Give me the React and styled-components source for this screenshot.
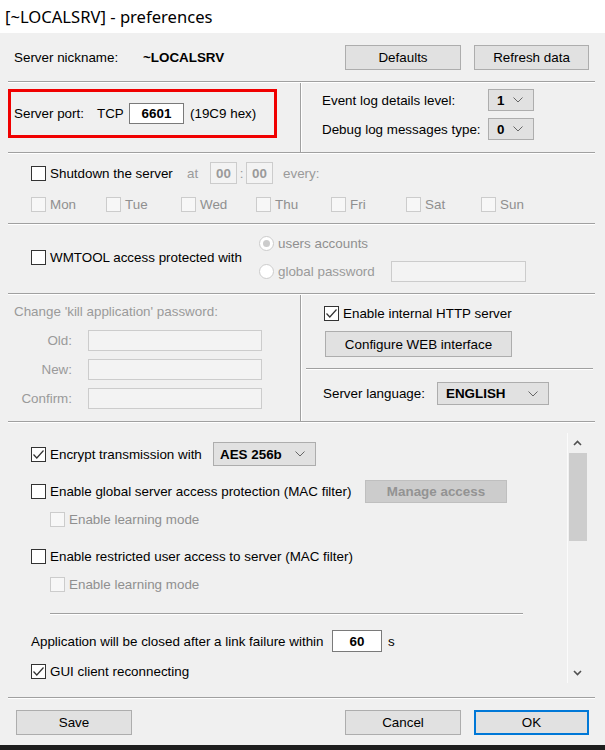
import React from 'react';
import styled, { createGlobalStyle } from 'styled-components';

const GlobalStyle = createGlobalStyle`
  html, body { margin: 0; padding: 0; background: #f0f0f0; }
  body {
    font-family: "Liberation Sans", Arial, sans-serif;
    font-size: 13.4px;
    color: #000;
  }
  * { box-sizing: border-box; }
`;

const Window = styled.div`
  width: 605px;
  height: 750px;
  display: flex;
  flex-direction: column;
  background: #f0f0f0;
  overflow: hidden;
`;

const TitleBar = styled.div`
  height: 33px;
  flex: none;
  background: #fff;
  display: flex;
  align-items: center;
  padding-left: 5px;
  font-family: "Noto Sans", "Open Sans", sans-serif;
  font-size: 16.6px;
  color: #000;
`;

const HLine = styled.div`
  flex: none;
  height: 2px;
  border-top: 1px solid #a0a0a0;
  border-bottom: 1px solid #fff;
  margin: ${p => p.$top || 0}px ${p => p.$right ?? 10}px 0 ${p => p.$left ?? 8}px;
  width: ${p => (p.$w ? `${p.$w}px` : 'auto')};
`;

const VLine = styled.div`
  flex: none;
  width: 2px;
  border-left: 1px solid #a0a0a0;
  border-right: 1px solid #fff;
`;

const Header = styled.div`
  height: 48px;
  flex: none;
  display: flex;
  align-items: center;
  padding: 0 16px 0 14px;
`;

const Label = styled.span`
  color: ${p => (p.$dim ? '#9a9a9a' : '#000')};
  font-weight: ${p => (p.$bold ? 'bold' : 'normal')};
  white-space: nowrap;
  width: ${p => (p.$w ? `${p.$w}px` : 'auto')};
  margin-left: ${p => p.$ml || 0}px;
  text-align: ${p => p.$align || 'left'};
  flex: none;
`;

const Button = styled.button`
  font: inherit;
  width: ${p => p.$w || 116}px;
  height: ${p => p.$h || 25}px;
  background: #e1e1e1;
  border: ${p => (p.$primary ? '2px solid #0078d7' : '1px solid #adadad')};
  color: #000;
  padding: 0;
  margin-left: ${p => p.$ml || 0}px;
  flex: none;
`;

const DisabledButton = styled(Button)`
  background: #cccccc;
  border: 1px solid #bfbfbf;
  color: #939393;
  font-weight: bold;
`;

const Spacer = styled.div`
  flex: 1;
`;

const Split = styled.div`
  display: flex;
  height: ${p => p.$h}px;
  flex: none;
`;

const LeftCol = styled.div`
  width: 300px;
  flex: none;
  padding: ${p => p.$pad || '0'};
`;

const RightCol = styled.div`
  flex: 1;
  padding: ${p => p.$pad || '0'};
`;

const PortBox = styled.div`
  margin: 6px 0 0 8px;
  width: 269px;
  height: 49px;
  border: 3px solid #f00000;
  display: flex;
  align-items: center;
  padding-left: 3px;
`;

const TextBox = styled.div`
  width: ${p => p.$w}px;
  height: ${p => p.$h || 21}px;
  flex: none;
  background: ${p => (p.$disabled ? '#f3f3f3' : '#fff')};
  border: 1px solid ${p => (p.$disabled ? '#cccccc' : '#7a7a7a')};
  display: flex;
  align-items: center;
  justify-content: center;
  font-weight: bold;
  color: ${p => (p.$disabled ? '#9a9a9a' : '#000')};
  margin-left: ${p => p.$ml || 0}px;
`;

const LogGrid = styled.div`
  display: grid;
  grid-template-columns: 166px 46px;
  row-gap: 7px;
  align-items: center;
`;

const SelectBox = styled.div`
  width: ${p => p.$w}px;
  height: ${p => p.$h || 22}px;
  flex: none;
  background: #e1e1e1;
  border: 1px solid #adadad;
  display: flex;
  align-items: center;
  justify-content: space-between;
  padding: 0 10px 0 ${p => p.$pl || 8}px;
  font-weight: bold;
  margin-left: ${p => p.$ml || 0}px;
`;

const Section = styled.div`
  height: ${p => p.$h}px;
  flex: none;
  padding: ${p => p.$pad || '0'};
`;

const Row = styled.div`
  display: flex;
  align-items: center;
  height: ${p => p.$h || 20}px;
  margin-top: ${p => p.$top || 0}px;
  padding-left: ${p => p.$pl || 0}px;
`;

const DayRow = styled.div`
  display: grid;
  grid-template-columns: repeat(7, 75px);
  height: 16px;
  margin-top: 12px;
  align-items: center;
`;

const CheckWrap = styled.label`
  display: flex;
  align-items: center;
  gap: 4px;
  flex: none;
  width: ${p => (p.$w ? `${p.$w}px` : 'auto')};
  color: ${p => (p.$disabled ? '#8f8f8f' : '#000')};
  white-space: nowrap;
`;

const Box = styled.span`
  width: 15px;
  height: 15px;
  flex: none;
  border: 1px solid ${p => (p.$disabled ? '#cccccc' : '#333')};
  background: ${p => (p.$disabled ? '#f7f7f7' : '#fff')};
  display: inline-flex;
  align-items: center;
  justify-content: center;
`;

const RadioDot = styled.span`
  width: 15px;
  height: 15px;
  flex: none;
  border-radius: 50%;
  border: 1px solid #cccccc;
  background: #fff;
  display: inline-flex;
  align-items: center;
  justify-content: center;
  &::after {
    content: '';
    width: 7px;
    height: 7px;
    border-radius: 50%;
    background: ${p => (p.$on ? '#cccccc' : 'transparent')};
  }
`;

const WmGrid = styled.div`
  display: grid;
  grid-template-columns: 228px auto;
  grid-template-rows: 20px 20px;
  row-gap: 8px;
  margin-top: 8px;
  align-items: center;
`;

const WmCell = styled.div`
  grid-row: 1 / span 2;
`;

const KillGrid = styled.div`
  display: grid;
  grid-template-columns: 58px 174px;
  column-gap: 16px;
  row-gap: 8px;
  margin-top: 11px;
  align-items: center;
  color: #9a9a9a;
`;

const ScrollArea = styled.div`
  height: 274px;
  flex: none;
  display: flex;
`;

const ScrollContent = styled.div`
  flex: 1;
  padding: 19px 0 0 31px;
`;

const ScrollBar = styled.div`
  width: 20px;
  margin: 10px 18px 14px 0;
  border-left: 1px solid #fbfbfb;
  display: flex;
  flex-direction: column;
  align-items: center;
`;

const Arrow = styled.div`
  height: 20px;
  width: 100%;
  display: flex;
  align-items: center;
  justify-content: center;
  flex: none;
`;

const Thumb = styled.div`
  width: 18px;
  height: 88px;
  background: #cdcdcd;
  flex: none;
`;

const Footer = styled.div`
  height: 46px;
  flex: none;
  display: flex;
  align-items: flex-start;
  padding: 11px 16px 0 16px;
`;

const BottomBand = styled.div`
  flex: 1;
  background: #1e1e1e;
`;

const Chevron = () => (
  <svg width="10" height="6" viewBox="0 0 10 6">
    <polyline points="0.5,0.5 5,5 9.5,0.5" fill="none" stroke="#666" strokeWidth="1" />
  </svg>
);

const Caret = ({ down }) => (
  <svg width="9" height="6" viewBox="0 0 9 6">
    <polyline
      points={down ? '1,1 4.5,4.5 8,1' : '1,5 4.5,1.5 8,5'}
      fill="none"
      stroke="#505050"
      strokeWidth="1.6"
    />
  </svg>
);

function Check({ checked, disabled, children, w }) {
  return (
    <CheckWrap $disabled={disabled} $w={w}>
      <Box $disabled={disabled}>
        {checked && (
          <svg width="13" height="13" viewBox="0 0 13 13">
            <polyline points="1.5,6.5 4.8,10 11.5,2.5" fill="none" stroke="#333" strokeWidth="1.2" />
          </svg>
        )}
      </Box>
      {children}
    </CheckWrap>
  );
}

function Radio({ on, children }) {
  return (
    <CheckWrap $disabled>
      <RadioDot $on={on} />
      {children}
    </CheckWrap>
  );
}

const days = ['Mon', 'Tue', 'Wed', 'Thu', 'Fri', 'Sat', 'Sun'];

export default function App() {
  return (
    <Window>
      <GlobalStyle />
      <TitleBar>[~LOCALSRV] - preferences</TitleBar>

      <Header>
        <Label $w={129}>Server nickname:</Label>
        <Label $bold>~LOCALSRV</Label>
        <Spacer />
        <Button>Defaults</Button>
        <Button $w={115} $ml={13}>Refresh data</Button>
      </Header>
      <HLine />

      <Split $h={69}>
        <LeftCol>
          <PortBox>
            <Label $w={83}>Server port:</Label>
            <Label $w={32}>TCP</Label>
            <TextBox $w={55}>6601</TextBox>
            <Label $ml={6}>(19C9 hex)</Label>
          </PortBox>
        </LeftCol>
        <VLine />
        <RightCol $pad="6px 0 0 20px">
          <LogGrid>
            <Label>Event log details level:</Label>
            <SelectBox $w={46}>1 <Chevron /></SelectBox>
            <Label>Debug log messages type:</Label>
            <SelectBox $w={46}>0 <Chevron /></SelectBox>
          </LogGrid>
        </RightCol>
      </Split>
      <HLine />

      <Section $h={69} $pad="8px 0 0 31px">
        <Row $h={22}>
          <Check w={156}>Shutdown the server</Check>
          <Label $dim $w={23}>at</Label>
          <TextBox $w={27} $h={22} $disabled>00</TextBox>
          <Label $dim $w={9} $align="center">:</Label>
          <TextBox $w={27} $h={22} $disabled>00</TextBox>
          <Label $dim $ml={10}>every:</Label>
        </Row>
        <DayRow>
          {days.map(d => (
            <Check key={d} disabled>{d}</Check>
          ))}
        </DayRow>
      </Section>
      <HLine />

      <Section $h={68} $pad="0 0 0 31px">
        <WmGrid>
          <WmCell>
            <Check>WMTOOL access protected with</Check>
          </WmCell>
          <Radio on>users accounts</Radio>
          <Row $h={20}>
            <Radio>
              <Label $dim $w={113}>global password</Label>
            </Radio>
            <TextBox $w={135} $disabled />
          </Row>
        </WmGrid>
      </Section>
      <HLine />

      <Split $h={126}>
        <LeftCol $pad="9px 0 0 14px">
          <Label $dim>Change 'kill application' password:</Label>
          <KillGrid>
            <Label $dim $align="right">Old:</Label>
            <TextBox $w={174} $disabled />
            <Label $dim $align="right">New:</Label>
            <TextBox $w={174} $disabled />
            <Label $dim $align="right">Confirm:</Label>
            <TextBox $w={174} $disabled />
          </KillGrid>
        </LeftCol>
        <VLine />
        <RightCol $pad="10px 0 0 0">
          <Row $h={16} $pl={22}>
            <Check checked>Enable internal HTTP server</Check>
          </Row>
          <Row $h={26} $top={10} $pl={23}>
            <Button $w={187} $h={26}>Configure WEB interface</Button>
          </Row>
          <HLine $top={11} $left={4} $right={12} />
          <Row $h={23} $top={12} $pl={21}>
            <Label $w={114}>Server language:</Label>
            <SelectBox $w={112} $h={23}>ENGLISH <Chevron /></SelectBox>
          </Row>
        </RightCol>
      </Split>
      <HLine />

      <ScrollArea>
        <ScrollContent>
          <Row $h={24}>
            <Check checked w={182}>Encrypt transmission with</Check>
            <SelectBox $w={103} $h={24} $pl={6}>AES 256b <Chevron /></SelectBox>
          </Row>
          <Row $h={24} $top={13}>
            <Check w={334}>Enable global server access protection (MAC filter)</Check>
            <DisabledButton $w={142} $h={23}>Manage access</DisabledButton>
          </Row>
          <Row $top={6} $pl={19}>
            <Check disabled>Enable learning mode</Check>
          </Row>
          <Row $top={17}>
            <Check>Enable restricted user access to server (MAC filter)</Check>
          </Row>
          <Row $top={8} $pl={19}>
            <Check disabled>Enable learning mode</Check>
          </Row>
          <HLine $top={19} $left={19} $right={0} $w={473} />
          <Row $h={22} $top={15}>
            <Label $w={301}>Application will be closed after a link failure within</Label>
            <TextBox $w={50} $h={22}>60</TextBox>
            <Label $ml={6}>s</Label>
          </Row>
          <Row $top={9}>
            <Check checked>GUI client reconnecting</Check>
          </Row>
        </ScrollContent>
        <ScrollBar>
          <Arrow><Caret /></Arrow>
          <Thumb />
          <Spacer />
          <Arrow><Caret down /></Arrow>
        </ScrollBar>
      </ScrollArea>
      <HLine />

      <Footer>
        <Button>Save</Button>
        <Spacer />
        <Button>Cancel</Button>
        <Button $w={115} $ml={13} $primary>OK</Button>
      </Footer>
      <BottomBand />
    </Window>
  );
}
